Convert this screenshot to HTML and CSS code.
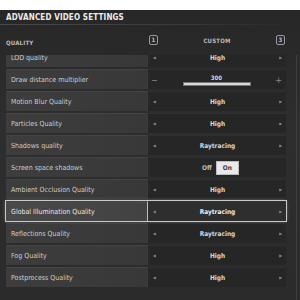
FILE: index.html
```html
<!DOCTYPE html>
<html lang="en">
<head>
  <meta charset="UTF-8">
  <title>Advanced Video Settings</title>
  <link rel="stylesheet" href="styles.css">
</head>
<body>
  <div class="topband"></div>
  <div class="panel">
    <div class="title">ADVANCED VIDEO SETTINGS</div>
    <div class="divider"></div>

    <div class="header">
      <div class="head-label">QUALITY</div>
      <div class="head-value">
        <span class="key">1</span>
        <span class="preset">CUSTOM</span>
        <span class="key">3</span>
      </div>
    </div>

    <div class="scroller">
      <div class="list">
        <div class="row first">
          <div class="label">LOD quality</div>
          <div class="value"><span class="arr">&#9664;</span><span class="val">High</span><span class="arr">&#9654;</span></div>
        </div>
        <div class="row">
          <div class="label">Draw distance multiplier</div>
          <div class="value slider-value">
            <span class="sign">&minus;</span>
            <div class="slider">
              <span class="num">300</span>
              <div class="track"></div>
            </div>
            <span class="sign">+</span>
          </div>
        </div>
        <div class="row">
          <div class="label">Motion Blur Quality</div>
          <div class="value"><span class="arr">&#9664;</span><span class="val">High</span><span class="arr">&#9654;</span></div>
        </div>
        <div class="row">
          <div class="label">Particles Quality</div>
          <div class="value"><span class="arr">&#9664;</span><span class="val">High</span><span class="arr">&#9654;</span></div>
        </div>
        <div class="row">
          <div class="label">Shadows quality</div>
          <div class="value"><span class="arr">&#9664;</span><span class="val">Raytracing</span><span class="arr">&#9654;</span></div>
        </div>
        <div class="row">
          <div class="label">Screen space shadows</div>
          <div class="value toggle-value">
            <span class="off">Off</span>
            <span class="on">On</span>
          </div>
        </div>
        <div class="row">
          <div class="label">Ambient Occlusion Quality</div>
          <div class="value"><span class="arr">&#9664;</span><span class="val">High</span><span class="arr">&#9654;</span></div>
        </div>
        <div class="row selected">
          <div class="label">Global Illumination Quality</div>
          <div class="value"><span class="arr">&#9664;</span><span class="val">Raytracing</span><span class="arr">&#9654;</span></div>
        </div>
        <div class="row">
          <div class="label">Reflections Quality</div>
          <div class="value"><span class="arr">&#9664;</span><span class="val">Raytracing</span><span class="arr">&#9654;</span></div>
        </div>
        <div class="row">
          <div class="label">Fog Quality</div>
          <div class="value"><span class="arr">&#9664;</span><span class="val">High</span><span class="arr">&#9654;</span></div>
        </div>
        <div class="row">
          <div class="label">Postprocess Quality</div>
          <div class="value"><span class="arr">&#9664;</span><span class="val">High</span><span class="arr">&#9654;</span></div>
        </div>
      </div>
      <div class="scrollbar"></div>
    </div>
  </div>
</body>
</html>
```

FILE: styles.css
```css
body {
  margin: 0;
  width: 300px;
  height: 300px;
  overflow: hidden;
  background-color: #2d2d2d;
  font-family: "DejaVu Sans Condensed", "DejaVu Sans", sans-serif;
  color: #cfcfcf;
}

.topband {
  height: 10px;
  background-color: #ffffff;
}

.panel {
  background: linear-gradient(#272727, #2e2e2e 40%, #2b2b2b);
  height: 290px;
}

.title {
  padding: 3px 0 0 6px;
  height: 11px;
  font-size: 8px;
  font-weight: bold;
  letter-spacing: 0.15px;
  color: #ececec;
}

.divider {
  height: 1px;
  background: linear-gradient(to right, #4a4a4a, #3a3a3a 60%, rgba(60, 60, 60, 0));
}

.header {
  display: flex;
  align-items: center;
  height: 30px;
  padding-left: 6px;
  font-size: 6px;
  font-weight: bold;
  letter-spacing: 0.2px;
  color: #bdbdbd;
}

.head-label {
  width: 141px;
  padding-top: 4px;
}

.head-value {
  width: 136px;
  display: flex;
  justify-content: space-between;
  align-items: center;
  padding: 0 0 0 2px;
}

.key {
  width: 7px;
  height: 8px;
  border: 1px solid #9a9a9a;
  border-radius: 2px;
  text-align: center;
  line-height: 8px;
  font-size: 6px;
}

.scroller {
  display: flex;
  height: 245px;
  overflow: hidden;
}

.list {
  width: 280px;
  margin-left: 6px;
  display: flex;
  flex-direction: column;
  gap: 2px;
}

.row {
  display: flex;
  height: 20px;
  flex-shrink: 0;
  font-size: 7px;
}

.row.first {
  margin-top: -8px;
}

.label {
  width: 141px;
  padding-left: 5px;
  display: flex;
  align-items: center;
  background: linear-gradient(to right, #3d3d3d, #383838);
  border-top: 1px solid #454545;
  box-sizing: border-box;
  color: #cdcdcd;
}

.value {
  width: 139px;
  display: flex;
  align-items: center;
  justify-content: space-between;
  padding: 0 4px 0 5px;
  box-sizing: border-box;
  background-color: #262626;
  border-left: 1px solid #3d3d3d;
  border-top: 1px solid #303030;
  color: #d8d8d8;
  font-weight: bold;
  font-size: 6.5px;
}

.arr {
  font-size: 4px;
  color: #8a8a8a;
}

.val {
  flex: 1;
  text-align: center;
}

.slider-value {
  padding: 0 4px 0 3px;
}

.sign {
  font-size: 9px;
  color: #8a8a8a;
  font-weight: normal;
}

.slider {
  flex: 1;
  display: flex;
  flex-direction: column;
  align-items: center;
  gap: 1px;
  padding-top: 1px;
}

.num {
  font-size: 6px;
  line-height: 7px;
}

.track {
  width: 66px;
  height: 2px;
  background-color: #d9d9d9;
  border: 1px solid #777;
}

.toggle-value {
  justify-content: flex-start;
  padding-left: 54px;
  gap: 4px;
}

.off {
  color: #bdbdbd;
}

.on {
  background-color: #e9e9e9;
  color: #3a3a3a;
  padding: 2px 6px;
  border: 1px solid #bdbdbd;
}

.selected {
  outline: 1px solid #c9c9c9;
  box-shadow: 0 0 4px rgba(220, 220, 220, 0.5);
}

.selected .label {
  background: linear-gradient(to right, #4a4a4a, #424242);
  color: #e6e6e6;
}

.selected .value {
  border-left: 1px solid #bcbcbc;
  background-color: #2e2e2e;
  color: #ececec;
}

.scrollbar {
  width: 1px;
  margin-left: 10px;
  background-color: #3e3e3e;
}
```
